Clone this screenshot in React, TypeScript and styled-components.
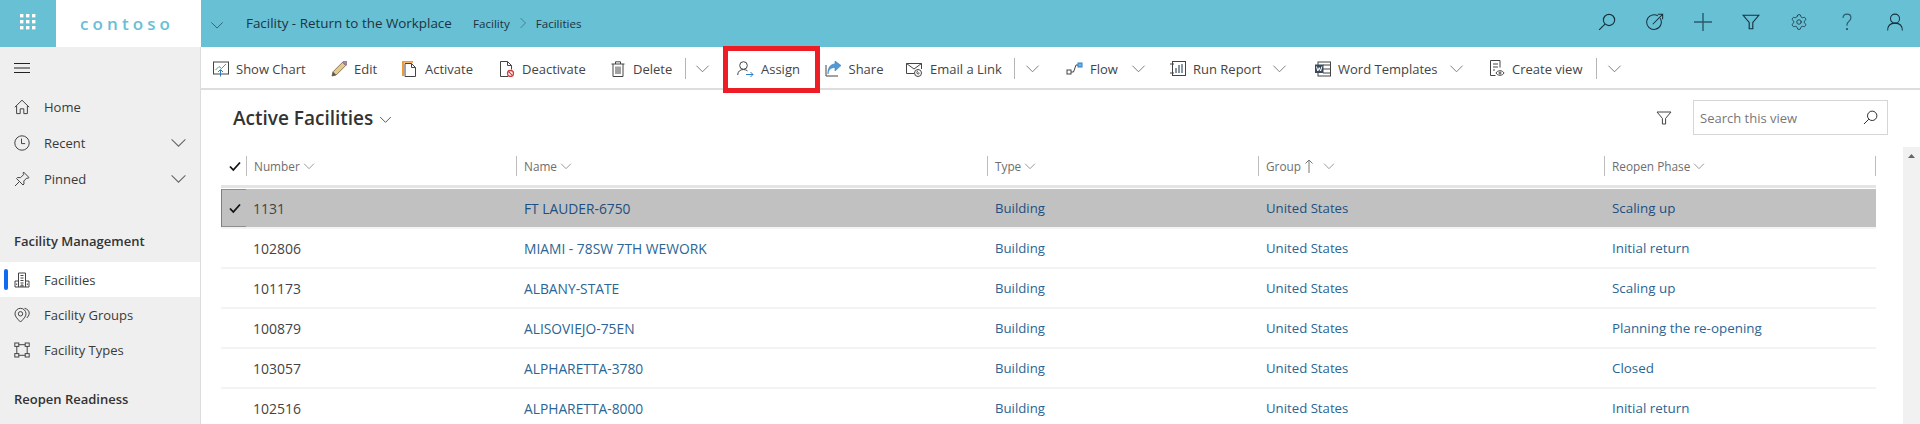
import React from "react";
import styled, { createGlobalStyle } from "styled-components";
import { Settings } from "lucide-react";

const GlobalStyle = createGlobalStyle`
  html, body {
    margin: 0;
    height: 424px;
    overflow: hidden;
    background: #fff;
  }
  body {
    font-family: "Open Sans", "Liberation Sans", sans-serif;
    font-size: 13px;
    color: #333;
  }
  *, *::before, *::after { box-sizing: border-box; }
`;

const Page = styled.div`
  width: 1920px;
  height: 424px;
  display: flex;
  flex-direction: column;
  overflow: hidden;
`;

const TopBar = styled.header`
  height: 47px;
  flex: none;
  display: flex;
  align-items: center;
  background: #68c0d4;
  color: #17303d;
`;

const Waffle = styled.div`
  width: 56px;
  height: 100%;
  display: flex;
  align-items: center;
  justify-content: center;
  padding-bottom: 4px;
`;

const Logo = styled.div`
  width: 145px;
  height: 100%;
  background: #fff;
  color: #68c0d4;
  font-size: 17px;
  font-weight: 600;
  letter-spacing: 4.1px;
  display: flex;
  align-items: center;
  padding: 0 0 1px 24px;
`;

const AppCaret = styled.div`
  width: 45px;
  display: flex;
  padding-left: 9px;
  padding-top: 2px;
`;

const AppTitle = styled.div`
  width: 227px;
  font-size: 13.4px;
  padding-bottom: 2px;
  color: #1c3340;
`;

const Crumb = styled.span`
  font-size: 11.6px;
  color: #1c3340;
  padding-bottom: 1px;
`;

const CrumbSep = styled.span`
  width: 26px;
  display: flex;
  justify-content: center;
  padding-bottom: 2px;
`;

const TopIcons = styled.div`
  margin-left: auto;
  display: flex;
  padding-right: 1px;
`;

const TopIcon = styled.div`
  width: 48px;
  height: 47px;
  display: flex;
  align-items: center;
  justify-content: center;
  padding-bottom: 3px;
`;

const Body = styled.div`
  flex: 1;
  display: flex;
  min-height: 0;
`;

const Sidebar = styled.nav`
  width: 201px;
  flex: none;
  background: #efefef;
  border-right: 1px solid #dcdcdc;
`;

const MenuRow = styled.div`
  height: 42px;
  display: flex;
  align-items: center;
  padding-left: 14px;
`;

const NavItem = styled.div<{ $h?: number; $active?: boolean }>`
  position: relative;
  height: ${(p) => p.$h ?? 35}px;
  display: flex;
  align-items: center;
  padding-left: 14px;
  gap: 14px;
  background: ${(p) => (p.$active ? "#fff" : "transparent")};
  color: #3a3a3a;

  ${(p) =>
    p.$active &&
    `&::before {
      content: "";
      position: absolute;
      left: 4px;
      top: 7px;
      width: 4px;
      height: 21px;
      border-radius: 2px;
      background: #0f6cf0;
    }`}
`;

const NavLabel = styled.span`
  flex: 1;
`;

const NavCaret = styled.span`
  display: flex;
  margin-right: 13px;
`;

const SectionTitle = styled.div<{ $top: number }>`
  margin-top: ${(p) => p.$top}px;
  height: 43px;
  display: flex;
  align-items: center;
  padding-left: 14px;
  font-weight: 600;
  color: #333;
`;

const Main = styled.main`
  flex: 1;
  min-width: 0;
  display: flex;
  flex-direction: column;
`;

const Toolbar = styled.div`
  height: 43px;
  flex: none;
  display: flex;
  align-items: center;
  padding: 2px 0 0 12px;
  border-bottom: 2px solid #dddddd;
  color: #444;
`;

const ToolItem = styled.div<{ $w: number; $boxed?: boolean }>`
  position: relative;
  width: ${(p) => p.$w}px;
  flex: none;
  display: flex;
  align-items: center;
  gap: 7px;
  white-space: nowrap;

  ${(p) =>
    p.$boxed &&
    `&::after {
      content: "";
      position: absolute;
      left: -14px;
      top: -14px;
      width: 97px;
      height: 47px;
      border: 5px solid #ee1c25;
    }`}
`;

const ToolSep = styled.div`
  width: 1px;
  height: 21px;
  background: #b5b5b5;
`;

const TitleRow = styled.div`
  height: 57px;
  flex: none;
  display: flex;
  align-items: center;
  padding: 0 32px 2px 32px;
`;

const ViewTitle = styled.h1`
  margin: 0;
  font-size: 19px;
  font-weight: 600;
  color: #333;
`;

const ViewCaret = styled.span`
  display: flex;
  margin-left: 6px;
  padding-top: 3px;
`;

const FilterBtn = styled.span`
  margin-left: auto;
  display: flex;
  margin-right: 21px;
  padding-top: 1px;
`;

const SearchBox = styled.div`
  width: 195px;
  height: 35px;
  display: flex;
  align-items: center;
  justify-content: space-between;
  padding: 0 9px 0 6px;
  border: 1px solid #d6d6d6;
  color: #777;
`;

const GridArea = styled.div`
  flex: 1;
  display: flex;
  min-height: 0;
  padding-left: 20px;
`;

const Table = styled.div`
  width: 1655px;
  flex: none;
`;

const HeaderRow = styled.div`
  height: 41px;
  display: grid;
  grid-template-columns: 25px 270px 471px 271px 346px 272px;
  align-items: center;
  border-bottom: 3px solid #e4e4e4;
  margin-bottom: 1px;
  color: #6e6e6e;
  font-size: 11.8px;
`;

const HeaderCheck = styled.div`
  display: flex;
  justify-content: flex-end;
  padding-right: 5px;
`;

const HeaderCell = styled.div`
  height: 20px;
  display: flex;
  align-items: center;
  gap: 3px;
  padding-left: 7px;
  border-left: 1px solid #bdbdbd;

  &:last-child {
    border-right: 1px solid #bdbdbd;
  }
`;

const SortArrow = styled.span`
  display: flex;
  margin-right: 6px;
`;

const Row = styled.div<{ $selected?: boolean }>`
  height: 40px;
  display: grid;
  grid-template-columns: 25px 270px 471px 271px 346px 272px;
  align-items: center;
  border-bottom: 2px solid #f3f3f3;
  background: ${(p) => (p.$selected ? "#c1c1c1" : "#fff")};
`;

const CheckCell = styled.div<{ $selected?: boolean }>`
  height: 100%;
  display: flex;
  align-items: center;
  justify-content: flex-end;
  padding-right: 5px;
  ${(p) =>
    p.$selected &&
    `border-left: 1px solid #7d7d7d;
     border-top: 1px solid #8e8e8e;
     border-bottom: 1px solid #8e8e8e;`}
`;

const NumberCell = styled.div`
  padding-left: 7px;
  color: #444;
  font-size: 14px;
`;

const LinkCell = styled.div<{ $selected?: boolean; $size?: number }>`
  padding-left: 8px;
  font-size: ${(p) => p.$size ?? 13.2}px;
  color: ${(p) => (p.$selected ? "#1d4f80" : "#2c6593")};
`;

const Scrollbar = styled.div`
  margin-left: 27px;
  width: 17px;
  background: #f1f1f1;
  display: flex;
  justify-content: center;
  padding-top: 7px;
`;

const Glyph = styled.svg.attrs({ fill: "none", xmlns: "http://www.w3.org/2000/svg" })`
  display: block;
  flex: none;
`;

type IconProps = { size?: number; color?: string };

const Chevron = ({ size = 16, color = "#666" }: IconProps) => (
  <Glyph width={size} height={size} viewBox="0 0 16 16" stroke={color} strokeWidth="1">
    <path d="M1.5 5 8 11.5 14.5 5" />
  </Glyph>
);

const WaffleIcon = () => (
  <Glyph width="16" height="16" viewBox="0 0 16 16">
    {[0, 6, 12].map((y) =>
      [0, 6, 12].map((x) => <rect key={`${x}-${y}`} x={x} y={y} width="3.4" height="3.4" fill="#fff" />)
    )}
  </Glyph>
);

const Funnel = ({ size = 18, color = "#17303d" }: IconProps) => (
  <Glyph width={size} height={size} viewBox="0 0 16 16" stroke={color} strokeWidth="1">
    <path d="M1 2h14L9.6 8.4V14H6.4V8.4z" />
  </Glyph>
);

const SearchIcon = ({ size = 18, color = "#17303d" }: IconProps) => (
  <Glyph width={size} height={size} viewBox="0 0 16 16" stroke={color} strokeWidth="1">
    <circle cx="9.8" cy="6.2" r="5" />
    <path d="M6.2 9.8 1 15" />
  </Glyph>
);

const TargetIcon = () => (
  <Glyph width="18" height="18" viewBox="0 0 16 16" stroke="#17303d" strokeWidth="0.9">
    <path d="M12.6 4.6A6.5 6.5 0 1 1 10.6 2.6" />
    <path d="M6 10 14.5 1.5M10.5 1.2h4.3v4.3" />
  </Glyph>
);

const PlusIcon = () => (
  <Glyph width="18" height="18" viewBox="0 0 18 18" stroke="#2a5a6a" strokeWidth="1.4">
    <path d="M9 0v18M0 9h18" />
  </Glyph>
);

const HelpIcon = () => (
  <Glyph width="18" height="18" viewBox="0 0 16 16" stroke="#2a5a6a" strokeWidth="1">
    <path d="M4.5 4.5C4.5 2.4 6 1 8 1s3.5 1.3 3.5 3.2c0 3-3.5 3-3.5 6.3v.8" />
    <circle cx="8" cy="14.3" r=".5" fill="#2a5a6a" />
  </Glyph>
);

const PersonIcon = () => (
  <Glyph width="18" height="18" viewBox="0 0 16 16" stroke="#17303d" strokeWidth="0.9">
    <circle cx="8" cy="5" r="4" />
    <path d="M1.5 15.5C1.5 11.5 4 9 8 9s6.5 2.5 6.5 6.5" />
  </Glyph>
);

const Hamburger = () => (
  <Glyph width="16" height="16" viewBox="0 0 16 16" stroke="#222" strokeWidth="1">
    <path d="M0 3.5h16M0 8h16M0 12.5h16" />
  </Glyph>
);

const HomeIcon = () => (
  <Glyph width="16" height="16" viewBox="0 0 16 16" stroke="#444" strokeWidth="1">
    <path d="M.8 8.2 8 1.2l7.2 7M2.6 7v7.6h3.6v-4.8h3.6v4.8h3.6V7" />
  </Glyph>
);

const ClockIcon = () => (
  <Glyph width="16" height="16" viewBox="0 0 16 16" stroke="#444" strokeWidth="1">
    <circle cx="8" cy="8" r="7.2" />
    <path d="M7.5 3.6v5h3.6" />
  </Glyph>
);

const PinIcon = () => (
  <Glyph width="16" height="16" viewBox="0 0 16 16" stroke="#444" strokeWidth="1">
    <path d="M9.5 1 15 6.5l-1 .8-1.2-.3-3 3 .2 3-1 1L2.5 7.5l1-1 3 .2 3-3-.3-1.2zM5 11l-4 4" />
  </Glyph>
);

const BuildingIcon = () => (
  <Glyph width="16" height="16" viewBox="0 0 16 16" stroke="#444" strokeWidth="1">
    <path d="M4.5 15V1h7v14M4.5 9H1v6h14V9h-3.5M6.5 3.5h3M6.5 6h3M6.5 8.5h3M6.5 11h3M7 15v-2h2v2M2.7 11.5v1.5M13.3 11.5v1.5" />
  </Glyph>
);

const GroupsIcon = () => (
  <Glyph width="16" height="16" viewBox="0 0 16 16" stroke="#444" strokeWidth="1">
    <path d="M6.5 15C3.5 12 1 9.6 1 6.8a5.500 5.500 0 0 1 11 0C12 9.6 9.5 12 6.5 15z" />
    <circle cx="6.5" cy="6.8" r="2.2" />
    <path d="M10.5 1.3c3 .6 5 2.8 4.7 5.4-.2 1.6-1.2 3-2.5 4.3" />
  </Glyph>
);

const TypesIcon = () => (
  <Glyph width="16" height="16" viewBox="0 0 16 16" stroke="#444" strokeWidth="1">
    <rect x=".8" y="1" width="4" height="3.4" />
    <rect x="11.2" y="1" width="4" height="3.4" />
    <rect x=".8" y="11.6" width="4" height="3.4" />
    <rect x="11.2" y="11.6" width="4" height="3.4" />
    <path d="M4.8 2.7h6.4M4.8 13.3h6.4M2.8 4.4v7.2M13.2 4.4v7.2" />
  </Glyph>
);

const ChartIcon = () => (
  <Glyph width="16" height="16" viewBox="0 0 16 16">
    <rect x=".5" y="1" width="15" height="12" stroke="#444" />
    <path d="M2.5 9 6 5.5l2.5 2L13 3" stroke="#4aa564" />
    <path d="M7.5 15.5V9M5 11l2.5-2.5L10 11" stroke="#2f7fc4" />
  </Glyph>
);

const PencilIcon = () => (
  <Glyph width="16" height="16" viewBox="0 0 16 16">
    <path d="M1 15l1-4.2L11.6 1.2l3.2 3.2L5.2 14z" fill="#e6c98c" stroke="#8a7a5a" />
    <path d="M11.6 1.2l3.2 3.2 1-1a2 2 0 0 0-3.2-3.2z" fill="#a58aa8" stroke="#8a6a8a" />
    <path d="M1 15l1-4.2 3.2 3.2z" fill="#555" />
  </Glyph>
);

const ActivateIcon = () => (
  <Glyph width="16" height="16" viewBox="0 0 16 16">
    <path d="M1 15V.8h10" stroke="#ef9b3c" strokeWidth="2" />
    <path d="M3 15.5V2.5h6.5l4 4v9z" fill="#fff" stroke="#444" />
    <path d="M9.5 2.5v4h4" stroke="#444" />
  </Glyph>
);

const DeactivateIcon = () => (
  <Glyph width="16" height="16" viewBox="0 0 16 16">
    <path d="M9 15.5H1.5V.5h7l4 4v4M8.5.5v4h4" stroke="#444" />
    <circle cx="11.5" cy="12.5" r="3" stroke="#d23b3b" strokeWidth="1.3" fill="#fff" />
    <path d="M9.6 10.6l3.8 3.8" stroke="#d23b3b" strokeWidth="1.2" />
  </Glyph>
);

const TrashIcon = () => (
  <Glyph width="16" height="16" viewBox="0 0 16 16" stroke="#444">
    <path d="M1.5 3h13M5.5 3V.8h5V3M3 3v12.5h10V3M6 5.5V13M8 5.5V13M10 5.5V13" />
  </Glyph>
);

const AssignIcon = () => (
  <Glyph width="17" height="16" viewBox="0 0 17 16">
    <circle cx="6.5" cy="4.5" r="3.8" stroke="#444" />
    <path d="M.7 14c0-3.4 2.4-5.5 5.8-5.5 1.6 0 3 .5 4 1.4" stroke="#444" />
    <path d="M9 13.5h7M13.5 11l2.5 2.5-2.5 2.5" stroke="#2f7fc4" />
  </Glyph>
);

const ShareIcon = () => (
  <Glyph width="17" height="16" viewBox="0 0 17 16">
    <path d="M1 4v11h12" stroke="#444" />
    <path d="M3 13c.4-4.5 3-6.5 7-6.5V10l6-5.500L10 0v3C5.5 3 2.5 7 3 13z" fill="#4f9ad8" stroke="#3a80bd" strokeWidth=".6" />
  </Glyph>
);

const EmailIcon = () => (
  <Glyph width="17" height="16" viewBox="0 0 17 16" stroke="#444">
    <path d="M8 12.5H.5v-10h15V8M.5 2.5 8 8l7.5-5.5" />
    <circle cx="12" cy="12" r="3.5" />
    <path d="M12 10c-1.5 0-1.5 3 0 3s1.5-1.5.5-1.5" />
  </Glyph>
);

const FlowIcon = () => (
  <Glyph width="17" height="16" viewBox="0 0 17 16">
    <rect x="1" y="9" width="4" height="4" stroke="#444" />
    <path d="M5 11h2.500L10 4h2" stroke="#444" />
    <rect x="12" y="2" width="4" height="4" fill="#6db4e8" stroke="#2f7fc4" />
  </Glyph>
);

const ReportIcon = () => (
  <Glyph width="16" height="16" viewBox="0 0 16 16">
    <rect x="2.5" y=".5" width="13" height="14" stroke="#444" />
    <path d="M0 3h4M0 12h4" stroke="#444" />
    <path d="M6 12V7M9 12V4M12 12V3" stroke="#6c7d8c" strokeWidth="1.6" />
  </Glyph>
);

const WordIcon = () => (
  <Glyph width="16" height="16" viewBox="0 0 16 16">
    <rect x="3" y="1" width="12.5" height="14" stroke="#444" />
    <path d="M8 4h7.5M8 8h7.5M8 12h7.5" stroke="#444" />
    <rect x="0" y="3.500" width="8.5" height="8.5" fill="#3b4a5a" />
    <path d="M1.5 5.5 2.800 10l1.400-3.400L5.600 10l1.300-4.500" stroke="#fff" />
  </Glyph>
);

const CreateViewIcon = () => (
  <Glyph width="16" height="17" viewBox="0 0 16 17" stroke="#444">
    <path d="M6.5 15.5H1.5V.5h9.5v7M4 4h5M4 7h5M4 10h2" />
    <path d="M7 13c1.5-3 6.5-3 8 0-1.5 3-6.5 3-8 0z" />
    <circle cx="11" cy="13" r="1" />
  </Glyph>
);

const CheckIcon = () => (
  <Glyph width="12" height="12" viewBox="0 0 12 12" stroke="#111" strokeWidth="1.8">
    <path d="M1 6.5 4.300 10 11 2.500" />
  </Glyph>
);

const ArrowUp = () => (
  <Glyph width="10" height="14" viewBox="0 0 10 14" stroke="#777">
    <path d="M5 14V1M1.500 4.500 5 1l3.500 3.500" />
  </Glyph>
);

const ScrollUp = () => (
  <Glyph width="7" height="4" viewBox="0 0 7 4">
    <path d="M3.500 0 7 4H0z" fill="#666" />
  </Glyph>
);

type ToolDef =
  | { kind: "item"; label: string; icon: React.ReactNode; w: number; boxed?: boolean }
  | { kind: "caret"; w: number }
  | { kind: "sep"; w: number };

const tools: ToolDef[] = [
  { kind: "item", label: "Show Chart", icon: <ChartIcon />, w: 118 },
  { kind: "item", label: "Edit", icon: <PencilIcon />, w: 71 },
  { kind: "item", label: "Activate", icon: <ActivateIcon />, w: 97 },
  { kind: "item", label: "Deactivate", icon: <DeactivateIcon />, w: 111 },
  { kind: "item", label: "Delete", icon: <TrashIcon />, w: 75 },
  { kind: "sep", w: 10 },
  { kind: "caret", w: 42 },
  { kind: "item", label: "Assign", icon: <AssignIcon />, w: 87.5, boxed: true },
  { kind: "item", label: "Share", icon: <ShareIcon />, w: 81.5 },
  { kind: "item", label: "Email a Link", icon: <EmailIcon />, w: 108 },
  { kind: "sep", w: 11 },
  { kind: "caret", w: 41 },
  { kind: "item", label: "Flow", icon: <FlowIcon />, w: 65 },
  { kind: "caret", w: 39 },
  { kind: "item", label: "Run Report", icon: <ReportIcon />, w: 102 },
  { kind: "caret", w: 43 },
  { kind: "item", label: "Word Templates", icon: <WordIcon />, w: 134 },
  { kind: "caret", w: 40 },
  { kind: "item", label: "Create view", icon: <CreateViewIcon />, w: 107 },
  { kind: "sep", w: 11 },
  { kind: "caret", w: 20 },
];

const rows = [
  { number: "1131", name: "FT LAUDER-6750", phase: "Scaling up", selected: true },
  { number: "102806", name: "MIAMI - 78SW 7TH WEWORK", phase: "Initial return" },
  { number: "101173", name: "ALBANY-STATE", phase: "Scaling up" },
  { number: "100879", name: "ALISOVIEJO-75EN", phase: "Planning the re-opening" },
  { number: "103057", name: "ALPHARETTA-3780", phase: "Closed" },
  { number: "102516", name: "ALPHARETTA-8000", phase: "Initial return" },
];

const App = () => {
  return (
    <Page>
      <GlobalStyle />
      <TopBar>
        <Waffle>
          <WaffleIcon />
        </Waffle>
        <Logo>contoso</Logo>
        <AppCaret>
          <Chevron size={14} color="#2a5a6a" />
        </AppCaret>
        <AppTitle>Facility - Return to the Workplace</AppTitle>
        <Crumb>Facility</Crumb>
        <CrumbSep>
          <Glyph width="8" height="12" viewBox="0 0 8 12" stroke="#4a7f90">
            <path d="M1.5 1 6.5 6l-5 5" />
          </Glyph>
        </CrumbSep>
        <Crumb>Facilities</Crumb>
        <TopIcons>
          <TopIcon>
            <SearchIcon />
          </TopIcon>
          <TopIcon>
            <TargetIcon />
          </TopIcon>
          <TopIcon>
            <PlusIcon />
          </TopIcon>
          <TopIcon>
            <Funnel />
          </TopIcon>
          <TopIcon>
            <Settings size={18} strokeWidth={1.1} color="#17303d" />
          </TopIcon>
          <TopIcon>
            <HelpIcon />
          </TopIcon>
          <TopIcon>
            <PersonIcon />
          </TopIcon>
        </TopIcons>
      </TopBar>
      <Body>
        <Sidebar>
          <MenuRow>
            <Hamburger />
          </MenuRow>
          <NavItem $h={36}>
            <HomeIcon />
            <NavLabel>Home</NavLabel>
          </NavItem>
          <NavItem $h={35}>
            <ClockIcon />
            <NavLabel>Recent</NavLabel>
            <NavCaret>
              <Chevron size={17} />
            </NavCaret>
          </NavItem>
          <NavItem $h={37}>
            <PinIcon />
            <NavLabel>Pinned</NavLabel>
            <NavCaret>
              <Chevron size={17} />
            </NavCaret>
          </NavItem>
          <SectionTitle $top={22}>Facility Management</SectionTitle>
          <NavItem $active>
            <BuildingIcon />
            <NavLabel>Facilities</NavLabel>
          </NavItem>
          <NavItem>
            <GroupsIcon />
            <NavLabel>Facility Groups</NavLabel>
          </NavItem>
          <NavItem>
            <TypesIcon />
            <NavLabel>Facility Types</NavLabel>
          </NavItem>
          <SectionTitle $top={10}>Reopen Readiness</SectionTitle>
        </Sidebar>
        <Main>
          <Toolbar>
            {tools.map((tool, i) => {
              if (tool.kind === "sep") {
                return (
                  <ToolItem key={i} $w={tool.w}>
                    <ToolSep />
                  </ToolItem>
                );
              }
              if (tool.kind === "caret") {
                return (
                  <ToolItem key={i} $w={tool.w}>
                    <Chevron size={15} color="#777" />
                  </ToolItem>
                );
              }
              return (
                <ToolItem key={i} $w={tool.w} $boxed={tool.boxed}>
                  {tool.icon}
                  <span>{tool.label}</span>
                </ToolItem>
              );
            })}
          </Toolbar>
          <TitleRow>
            <ViewTitle>Active Facilities</ViewTitle>
            <ViewCaret>
              <Chevron size={13} color="#333" />
            </ViewCaret>
            <FilterBtn>
              <Funnel size={16} color="#444" />
            </FilterBtn>
            <SearchBox>
              <span>Search this view</span>
              <SearchIcon size={15} color="#222" />
            </SearchBox>
          </TitleRow>
          <GridArea>
            <Table>
              <HeaderRow>
                <HeaderCheck>
                  <CheckIcon />
                </HeaderCheck>
                <HeaderCell>
                  Number <Chevron size={12} color="#777" />
                </HeaderCell>
                <HeaderCell>
                  Name <Chevron size={12} color="#777" />
                </HeaderCell>
                <HeaderCell>
                  Type <Chevron size={12} color="#777" />
                </HeaderCell>
                <HeaderCell>
                  Group
                  <SortArrow>
                    <ArrowUp />
                  </SortArrow>
                  <Chevron size={12} color="#777" />
                </HeaderCell>
                <HeaderCell>
                  Reopen Phase <Chevron size={12} color="#777" />
                </HeaderCell>
              </HeaderRow>
              {rows.map((row) => (
                <Row key={row.number} $selected={row.selected}>
                  <CheckCell $selected={row.selected}>{row.selected && <CheckIcon />}</CheckCell>
                  <NumberCell>{row.number}</NumberCell>
                  <LinkCell $selected={row.selected} $size={13.8}>
                    {row.name}
                  </LinkCell>
                  <LinkCell $selected={row.selected}>Building</LinkCell>
                  <LinkCell $selected={row.selected}>United States</LinkCell>
                  <LinkCell $selected={row.selected} $size={13.4}>
                    {row.phase}
                  </LinkCell>
                </Row>
              ))}
            </Table>
            <Scrollbar>
              <ScrollUp />
            </Scrollbar>
          </GridArea>
        </Main>
      </Body>
    </Page>
  );
};

export default App;
